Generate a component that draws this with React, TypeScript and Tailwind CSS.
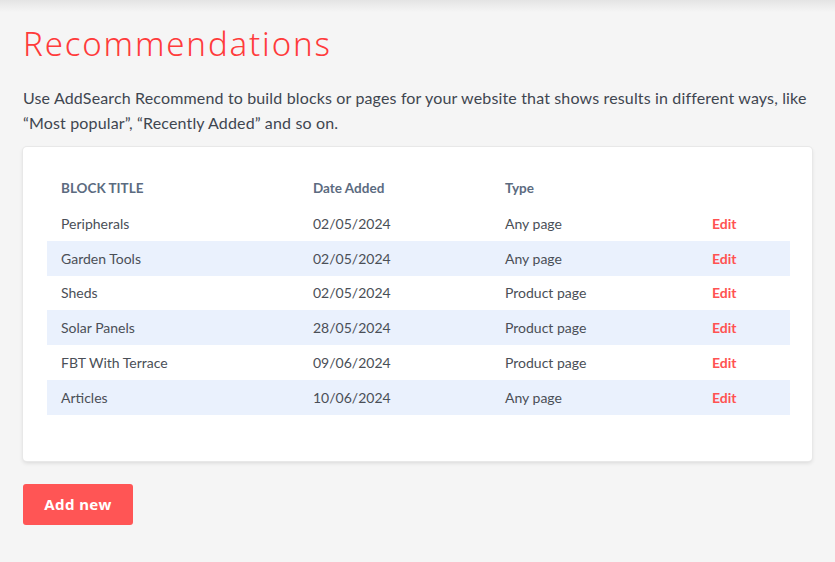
const rows = [
  { title: 'Peripherals', date: '02/05/2024', type: 'Any page' },
  { title: 'Garden Tools', date: '02/05/2024', type: 'Any page' },
  { title: 'Sheds', date: '02/05/2024', type: 'Product page' },
  { title: 'Solar Panels', date: '28/05/2024', type: 'Product page' },
  { title: 'FBT With Terrace', date: '09/06/2024', type: 'Product page' },
  { title: 'Articles', date: '10/06/2024', type: 'Any page' },
]

const body = { fontFamily: "'Lato', 'Noto Sans', sans-serif" }
const heading = { fontFamily: "'Noto Sans', 'Liberation Sans', sans-serif" }

export default function App() {
  return (
    <div className="min-h-[562px] bg-[#f5f5f5]" style={body}>
      <div className="h-[12px] bg-gradient-to-b from-[#e4e4e4] to-[#f5f5f5]" />
      <div className="px-[23px]">
        <h1 className="mt-[12px] text-[33px] leading-[40px] font-light text-[#ff3b3b] tracking-[1.85px]" style={heading}>
          Recommendations
        </h1>
        <p className="mt-[21px] text-[16px] leading-[25px] text-[#3f4650] tracking-[0.15px]">
          Use AddSearch Recommend to build blocks or pages for your website that shows results in different ways, like
          <br />
          “Most popular”, “Recently Added” and so on.
        </p>

        <div className="mt-[12px] w-[789px] rounded-[4px] bg-white shadow-[0_0_0_1px_#e8e8e8,0_2px_4px_rgba(0,0,0,0.12)] pl-[24px] pr-[22px] pt-[23px] pb-[46px]">
          <div className="grid grid-cols-[252px_192px_207px_1fr] h-[36px] items-center px-[14px] text-[13.5px] font-bold text-[#5b6b80]">
            <span>BLOCK TITLE</span>
            <span>Date Added</span>
            <span>Type</span>
            <span />
          </div>
          {rows.map((r, i) => (
            <div
              key={r.title}
              className={`grid grid-cols-[252px_192px_207px_1fr] h-[34.8px] items-center px-[14px] text-[14px] text-[#4a4f57] ${i % 2 === 1 ? 'bg-[#eaf1fd]' : ''}`}
            >
              <span>{r.title}</span>
              <span>{r.date}</span>
              <span>{r.type}</span>
              <span className="font-bold text-[#ff5252]">Edit</span>
            </div>
          ))}
        </div>

        <button
          className="mt-[23px] h-[41px] w-[110px] rounded-[3px] bg-[#ff5555] text-white text-[15px] font-bold tracking-[0.4px]"
          style={heading}
        >
          Add new
        </button>
      </div>
    </div>
  )
}
